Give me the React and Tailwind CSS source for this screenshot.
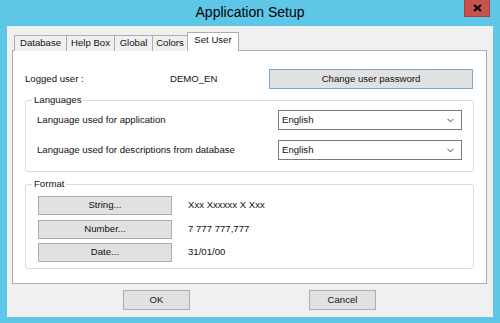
import { ChevronDown } from "lucide-react";

const tabs = [
  { label: "Database", w: "w-[53px]" },
  { label: "Help Box", w: "w-[49px]" },
  { label: "Global", w: "w-[39px]" },
  { label: "Colors", w: "w-[36px]" },
];

const Combo = ({ value }) => (
  <div className="flex items-center justify-between w-[184px] h-[20px] bg-white border border-[#7a7a7a] pl-[3px] pr-[5px]">
    <span>{value}</span>
    <ChevronDown size={11} strokeWidth={2} className="text-[#333]" />
  </div>
);

const Btn = ({ children, className = "" }) => (
  <button
    className={`flex items-center justify-center bg-[#e1e1e1] border border-[#adadad] text-[#111] ${className}`}
  >
    {children}
  </button>
);

const FormatRow = ({ label, value }) => (
  <div className="flex items-center gap-[16px]">
    <Btn className="w-[134px] h-[19px]">{label}</Btn>
    <span>{value}</span>
  </div>
);

export default function App() {
  return (
    <div className="w-[500px] h-[323px] bg-[#5ec7e8] flex flex-col font-['Liberation_Sans',Arial,sans-serif] text-[9.6px] text-[#111] overflow-hidden">
      {/* title bar */}
      <div className="relative h-[26px] flex items-center justify-center">
        <span className="text-[14px] text-black leading-none -mt-[2px]">Application Setup</span>
        <div className="absolute right-[10px] top-0 w-[26px] h-[17px] bg-[#c75050] border border-[#b03c3c] border-t-0 flex items-center justify-center">
          <svg width="9" height="8" viewBox="0 0 9 8">
            <path d="M1 1 L8 7 M8 1 L1 7" stroke="#000" strokeWidth="2" />
          </svg>
        </div>
      </div>

      {/* client area */}
      <div className="mx-[7px] h-[291px] bg-[#f0f0f0] flex flex-col pl-[5px] pr-[6px] pt-[6px]">
        {/* tabs */}
        <div className="flex items-end h-[19px] pl-[2px] relative z-10 -mb-px">
          {tabs.map((t) => (
            <div
              key={t.label}
              className={`${t.w} h-[16px] border border-b-0 border-[#adadad] bg-[#f0f0f0] flex items-center justify-center -mr-px pb-[1px]`}
            >
              {t.label}
            </div>
          ))}
          <div className="w-[52px] h-[19px] border border-b-0 border-[#adadad] bg-white flex items-center justify-center pb-[3px]">
            Set User
          </div>
        </div>

        {/* panel */}
        <div className="h-[234px] bg-white border border-[#adadad] flex flex-col px-[12px] pt-[18px]">
          <div className="flex items-center h-[20px]">
            <span className="w-[145px]">Logged user :</span>
            <span className="w-[99px]">DEMO_EN</span>
            <button className="w-[204px] h-[20px] bg-[#e1e1e1] border border-[#7ea6d4] flex items-center justify-center">
              Change user password
            </button>
          </div>

          {/* Languages */}
          <div className="relative mt-[11px] h-[72px] border border-[#dcdcdc] rounded-[3px] flex flex-col gap-[10px] pl-[11px] pr-[11px] pt-[9px]">
            <span className="absolute left-[6px] -top-[7px] bg-white px-[2px] leading-[12px]">Languages</span>
            <div className="flex items-center justify-between">
              <span>Language used for application</span>
              <Combo value="English" />
            </div>
            <div className="flex items-center justify-between">
              <span>Language used for descriptions from database</span>
              <Combo value="English" />
            </div>
          </div>

          {/* Format */}
          <div className="relative mt-[12px] h-[85px] border border-[#dcdcdc] rounded-[3px] flex flex-col gap-[4.5px] pl-[12px] pt-[11px]">
            <span className="absolute left-[6px] -top-[7px] bg-white px-[2px] leading-[12px]">Format</span>
            <FormatRow label="String..." value="Xxx Xxxxxx X Xxx" />
            <FormatRow label="Number..." value="7 777 777,777" />
            <FormatRow label="Date..." value="31/01/00" />
          </div>
        </div>

        {/* dialog buttons */}
        <div className="flex justify-center gap-[119px] mt-[6px] pr-[0px]">
          <Btn className="w-[67px] h-[20px]">OK</Btn>
          <Btn className="w-[67px] h-[20px]">Cancel</Btn>
        </div>
      </div>
    </div>
  );
}
